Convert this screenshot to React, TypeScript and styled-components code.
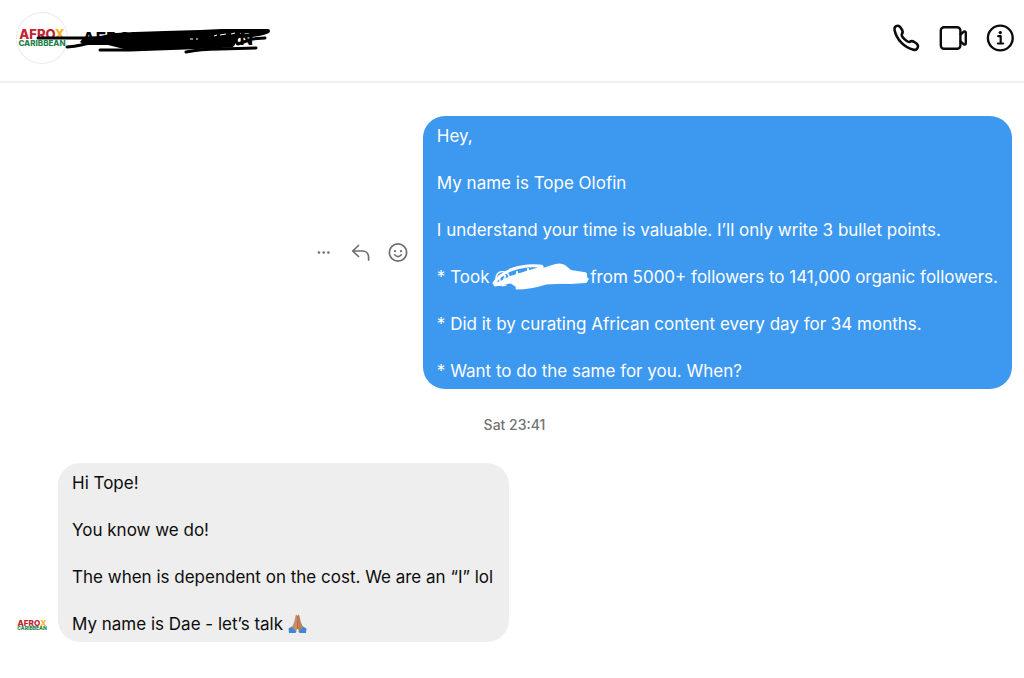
import React from 'react';
import styled, { createGlobalStyle } from 'styled-components';

const GlobalStyle = createGlobalStyle`
  * { box-sizing: border-box; }
  body {
    margin: 0;
    background: #fff;
    color: #0c0c0c;
    font-family: Inter, "Liberation Sans", sans-serif;
  }
`;

const Page = styled.div`
  min-height: 100vh;
  display: flex;
  flex-direction: column;
`;

const Header = styled.header`
  position: relative;
  display: flex;
  align-items: center;
  justify-content: space-between;
  padding: 12px 10px 17px 16px;
  border-bottom: 2px solid #f1f1f1;
`;

const Account = styled.div`
  display: flex;
  align-items: center;
  gap: 14px;
`;

const Avatar = styled.div<{ $size: number; $ring?: boolean }>`
  width: ${(p) => p.$size}px;
  height: ${(p) => p.$size}px;
  flex: none;
  border-radius: 50%;
  box-shadow: ${(p) => (p.$ring ? 'inset 0 0 0 1px #ebebeb' : 'none')};
  svg { display: block; width: 100%; height: 100%; }
`;

const LogoText = styled.text`
  font-family: Inter, "Liberation Sans", sans-serif;
  font-weight: 800;
  text-anchor: middle;
`;

const AccountName = styled.h1`
  margin: 0;
  padding-top: 2px;
  font-size: 18px;
  line-height: 24px;
  font-weight: 700;
  color: #000;
`;

const HeaderScribble = styled.svg`
  position: absolute;
  left: 0;
  top: 0;
  pointer-events: none;
`;

const HeaderActions = styled.nav`
  display: flex;
  gap: 19px;
`;

const IconButton = styled.button<{ $size: number }>`
  width: ${(p) => p.$size}px;
  height: ${(p) => p.$size}px;
  padding: 0;
  border: 0;
  background: none;
  color: inherit;
  cursor: pointer;
  svg {
    display: block;
    width: 100%;
    height: 100%;
    fill: none;
    stroke: currentColor;
    stroke-linecap: round;
    stroke-linejoin: round;
  }
`;

const Thread = styled.main`
  display: flex;
  flex-direction: column;
  padding: 33px 12px 36px 17px;
`;

const OutgoingRow = styled.div`
  display: flex;
  justify-content: flex-end;
  align-items: center;
  gap: 15px;
`;

const MessageActions = styled.div`
  display: flex;
  gap: 17px;
  color: #6e6e6e;
`;

const IncomingRow = styled.div`
  display: flex;
  align-items: flex-end;
  gap: 11px;
  ${Avatar} { margin-bottom: 2px; }
`;

const Bubble = styled.div<{ $own?: boolean }>`
  display: flex;
  flex-direction: column;
  gap: 24px;
  padding: 9px ${(p) => (p.$own ? 14 : 16)}px 6px 14px;
  border-radius: 22px;
  background: ${(p) => (p.$own ? '#3d98ef' : '#eeeeee')};
  color: ${(p) => (p.$own ? '#fff' : '#0c0c0c')};
`;

const Line = styled.p`
  margin: 0;
  font-size: 17px;
  line-height: 23px;
`;

const Redacted = styled.span`
  position: relative;
  display: inline-block;
  width: 96px;
  svg {
    position: absolute;
    left: -4px;
    top: -5px;
  }
`;

const Emoji = styled.svg`
  display: inline-block;
  width: 19px;
  height: 20px;
  vertical-align: -4px;
`;

const Timestamp = styled.time`
  align-self: center;
  margin: 25px 0 28px;
  font-size: 14px;
  line-height: 21px;
  font-weight: 500;
  color: #737373;
`;

function Logo({ viewBox }: { viewBox: string }) {
  return (
    <svg viewBox={viewBox} role="img" aria-label="Afrox Caribbean">
      <LogoText x="26" y="27" fontSize="13" fill="#c22331">
        AFRO<tspan fill="#f3b51f">X</tspan>
      </LogoText>
      <LogoText x="26" y="34" fontSize="8" fill="#23834a">CARIBBEAN</LogoText>
    </svg>
  );
}

export default function App() {
  return (
    <Page>
      <GlobalStyle />
      <Header>
        <Account>
          <Avatar $size={52} $ring><Logo viewBox="0 0 52 52" /></Avatar>
          <AccountName>AFROX CARIBBEAN</AccountName>
        </Account>
        <HeaderScribble width="280" height="70" viewBox="0 0 280 70" aria-hidden="true">
          <path d="M84 37 L100 36 L116 33 L135 32 L165 31 L200 30 L222 29 L240 29 L240 36 L234 46 L210 46 L180 48 L150 50 L124 49 L108 45 L84 45 L80 42Z" />
          <g fill="none" stroke="#000" strokeLinecap="round" strokeLinejoin="round">
            <path strokeWidth="3" d="M38 38 L92 38" />
            <path strokeWidth="3" d="M67 47 Q82 46 94 41" />
            <path strokeWidth="3" d="M100 50 L130 50 L185 48 L232 46" />
            <path strokeWidth="3" d="M186 52 Q200 49 220 49 L256 48" />
            <path strokeWidth="4" d="M222 31 L268 31 Q262 35 238 36" />
            <path strokeWidth="3" d="M265 38 L252 39 L238 44" />
          </g>
          <path d="M214 36 L217 35 M220 35 L226 34 M190 39 L193 39 M196 39 L198 39 M231 34 L235 33" stroke="#fff" strokeWidth="1" />
        </HeaderScribble>
        <HeaderActions>
          <IconButton $size={28} aria-label="Audio call">
            <svg viewBox="0 0 28 28" strokeWidth="2.6">
              <path d="M2.6 6.2 C1.9 3.3 3.7 1.8 5.8 1.8 C7.6 1.8 8.5 3.1 9.8 5.4 C11.4 8.1 10.6 9.1 9.9 10.1 C9.1 11.3 10.5 13.1 12.5 15.2 C14.6 17.3 16.4 18.6 17.6 17.8 C18.7 17.1 19.8 16.4 22.4 18 C24.7 19.4 26 20.3 26 22 C26 24.3 24.4 26.4 21.5 25.7 C12.3 23.4 4.5 15.5 2.6 6.2Z" />
            </svg>
          </IconButton>
          <IconButton $size={28} aria-label="Video call">
            <svg viewBox="0 0 28 28" strokeWidth="2.4">
              <rect x="1.8" y="3.2" width="19.6" height="21.6" rx="3.4" />
              <path d="M21.6 10.5 L24.8 7.7 Q26.7 6.8 26.8 8.7 V19.3 Q26.7 21.2 24.8 20.3 L21.6 17.5" />
            </svg>
          </IconButton>
          <IconButton $size={28} aria-label="Conversation information">
            <svg viewBox="0 0 28 28" strokeWidth="2.4">
              <circle cx="14.3" cy="14" r="12.4" />
              <path d="M12.2 12.2 H14.7 V19.4 M11.9 19.5 H17.1" strokeWidth="2.2" />
              <circle cx="14.3" cy="8.6" r="1.7" fill="currentColor" stroke="none" />
            </svg>
          </IconButton>
        </HeaderActions>
      </Header>

      <Thread>
        <OutgoingRow>
          <MessageActions>
            <IconButton $size={20} aria-label="More">
              <svg viewBox="0 0 20 20">
                <g fill="currentColor" stroke="none">
                  <circle cx="5" cy="9.5" r="1.3" />
                  <circle cx="9.7" cy="9.5" r="1.3" />
                  <circle cx="14.4" cy="9.5" r="1.3" />
                </g>
              </svg>
            </IconButton>
            <IconButton $size={20} aria-label="Reply">
              <svg viewBox="0 0 20 20" strokeWidth="1.7">
                <path d="M7.5 2.5 L1.7 8 L7.5 13.5 M1.7 8 H11.5 C15.3 8 17.6 10.8 17.6 14.5 V17" />
              </svg>
            </IconButton>
            <IconButton $size={20} aria-label="React">
              <svg viewBox="0 0 20 20" strokeWidth="1.7">
                <circle cx="10" cy="9.5" r="8.6" />
                <path d="M6.7 11.8 Q10 15.4 13.3 11.8" />
                <circle cx="7" cy="8.2" r="1.1" fill="currentColor" stroke="none" />
                <circle cx="13" cy="8.2" r="1.1" fill="currentColor" stroke="none" />
              </svg>
            </IconButton>
          </MessageActions>
          <Bubble $own>
            <Line>Hey,</Line>
            <Line>My name is Tope Olofin</Line>
            <Line>I understand your time is valuable. I’ll only write 3 bullet points.</Line>
            <Line>
              * Took{' '}
              <Redacted>
                @
                <svg width="100" height="32" viewBox="0 0 100 32" aria-hidden="true">
                  <path fill="#fff" d="M12 20 L20 15 L32 12 L50 8 L62 4 Q70 1 75 4 L81 9 L94 11 Q98 11 97 16 L99 18 L96 22 L80 23 L62 22 L48 24 L34 28 L26 26 L20 22Z" />
                  <g fill="none" stroke="#fff" strokeLinecap="round" strokeLinejoin="round">
                    <path strokeWidth="3" d="M4 22 C12 10 30 3 50 5 C58 6 42 10 28 14 L5 24 L20 21 M27 27 Q40 27 56 22 L96 20" />
                    <path strokeWidth="2" d="M27 11 V14 M38 8 V12 M14 18 V23" />
                  </g>
                </svg>
              </Redacted>
              from 5000+ followers to 141,000 organic followers.
            </Line>
            <Line>* Did it by curating African content every day for 34 months.</Line>
            <Line>* Want to do the same for you. When?</Line>
          </Bubble>
        </OutgoingRow>

        <Timestamp>Sat 23:41</Timestamp>

        <IncomingRow>
          <Avatar $size={30}><Logo viewBox="2 2 48 48" /></Avatar>
          <Bubble>
            <Line>Hi Tope!</Line>
            <Line>You know we do!</Line>
            <Line>The when is dependent on the cost. We are an “I” lol</Line>
            <Line>
              My name is Dae - let’s talk{' '}
              <Emoji viewBox="0 0 19 20" role="img" aria-label="Folded hands">
                <path fill="#4385cf" d="M0.5 14.5 L4 12.5 L8.6 17 L7.5 19 L1 19Z M18.5 14.5 L15 12.5 L10.4 17 L11.5 19 L18 19Z" />
                <path fill="#c98f68" d="M9.3 1 Q8 0.2 7.5 2 L6.2 8 L4 13 L8 17 L9.5 14.5Z" />
                <path fill="#bb7f59" d="M9.7 1 Q11 0.2 11.5 2 L12.8 8 L15 13 L11 17 L9.5 14.5Z" />
                <path stroke="#8f5e3e" strokeWidth="0.7" d="M9.5 2 V15" />
              </Emoji>
            </Line>
          </Bubble>
        </IncomingRow>
      </Thread>
    </Page>
  );
}
